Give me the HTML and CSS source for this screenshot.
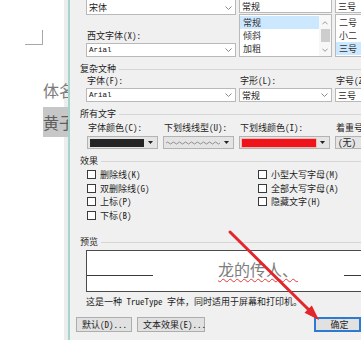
FILE: index.html
```html
<!DOCTYPE html>
<html lang="zh">
<head>
<meta charset="utf-8">
<title>字体</title>
<link rel="stylesheet" href="styles.css">
</head>
<body>
<div class="screen">
  <div class="doc">
    <div class="corner"></div>
    <div class="doc-line name">体名</div>
    <div class="doc-line hl">黄子</div>
  </div>
  <div class="dialog">
    <div class="fonts-top">
      <div class="col">
        <div class="combo c-first"><span>宋体</span><svg class="chev" viewBox="0 0 7 4"><polyline points="0.5,0.5 3.5,3.5 6.5,0.5"/></svg></div>
        <div class="label l-west">西文字体(X):</div>
        <div class="combo c-second"><span class="latin">Arial</span><svg class="chev" viewBox="0 0 7 4"><polyline points="0.5,0.5 3.5,3.5 6.5,0.5"/></svg></div>
      </div>
      <div class="col">
        <div class="field">常规</div>
        <div class="listbox">
          <div class="items">
            <div class="item sel">常规</div>
            <div class="item">倾斜</div>
            <div class="item">加粗</div>
          </div>
          <div class="scrollbar">
            <svg class="sb-arrow" viewBox="0 0 7 4"><polyline points="0.5,3.5 3.5,0.5 6.5,3.5"/></svg>
            <div class="thumb"></div>
            <svg class="sb-arrow" viewBox="0 0 7 4"><polyline points="0.5,0.5 3.5,3.5 6.5,0.5"/></svg>
          </div>
        </div>
      </div>
      <div class="col">
        <div class="field">三号</div>
        <div class="listbox">
          <div class="items">
            <div class="item">二号</div>
            <div class="item">小二</div>
            <div class="item sel">三号</div>
          </div>
        </div>
      </div>
    </div>

    <div class="group">复杂文种</div>
    <div class="grid3 labels">
      <div class="label">字体(F):</div>
      <div class="label">字形(L):</div>
      <div class="label">字号(Z):</div>
    </div>
    <div class="grid3 row-combos">
      <div class="combo"><span class="latin">Arial</span><svg class="chev" viewBox="0 0 7 4"><polyline points="0.5,0.5 3.5,3.5 6.5,0.5"/></svg></div>
      <div class="combo"><span>常规</span><svg class="chev" viewBox="0 0 7 4"><polyline points="0.5,0.5 3.5,3.5 6.5,0.5"/></svg></div>
      <div class="combo"><span>三号</span></div>
    </div>

    <div class="group">所有文字</div>
    <div class="grid4 labels">
      <div class="label">字体颜色(C):</div>
      <div class="label">下划线线型(U):</div>
      <div class="label">下划线颜色(I):</div>
      <div class="label">着重号(·)</div>
    </div>
    <div class="grid4 row-colors">
      <div class="dd"><span class="swatch black"></span><svg class="tri" viewBox="0 0 5 3"><polygon points="0,0 5,0 2.5,3"/></svg></div>
      <div class="dd"><svg class="wave" viewBox="0 0 54 4" preserveAspectRatio="none"><path d="M0 2 q1.5 -2 3 0 t3 0 t3 0 t3 0 t3 0 t3 0 t3 0 t3 0 t3 0 t3 0 t3 0 t3 0 t3 0 t3 0 t3 0 t3 0 t3 0 t3 0"/></svg><svg class="tri" viewBox="0 0 5 3"><polygon points="0,0 5,0 2.5,3"/></svg></div>
      <div class="dd"><span class="swatch red"></span><svg class="tri" viewBox="0 0 5 3"><polygon points="0,0 5,0 2.5,3"/></svg></div>
      <div class="dd"><span>(无)</span></div>
    </div>

    <div class="group">效果</div>
    <div class="checks">
      <div class="check"><span class="box"></span>删除线(K)</div>
      <div class="check"><span class="box"></span>双删除线(G)</div>
      <div class="check"><span class="box"></span>上标(P)</div>
      <div class="check"><span class="box"></span>下标(B)</div>
      <div class="check"><span class="box"></span>小型大写字母(M)</div>
      <div class="check"><span class="box"></span>全部大写字母(A)</div>
      <div class="check"><span class="box"></span>隐藏文字(H)</div>
    </div>

    <div class="group g-preview">预览</div>
    <div class="preview">
      <div class="base-line"></div>
      <div class="sample">龙的传人、</div>
      <div class="base-line right"></div>
    </div>
    <div class="desc">这是一种 TrueType 字体，同时适用于屏幕和打印机。</div>

    <div class="buttons">
      <div class="btn b-default">默认(D)...</div>
      <div class="btn b-effects">文本效果(E)...</div>
      <div class="btn b-ok">确定</div>
    </div>
  </div>

  <svg class="arrow" viewBox="0 0 361 340" width="361" height="340">
    <line x1="230" y1="232" x2="309" y2="310"/>
    <polygon points="319,320 304.5,312.7 311.8,305.4"/>
  </svg>
</div>
</body>
</html>
```

FILE: styles.css
```css
* { box-sizing: border-box; }
html, body { margin: 0; padding: 0; background: #fff; }

.screen {
  position: relative;
  width: 361px;
  height: 340px;
  overflow: hidden;
  display: flex;
  font-family: "Noto Sans Mono CJK SC", "Noto Sans CJK SC", sans-serif;
  font-size: 9px;
  color: #1e1e1e;
}

/* document behind the dialog */
.doc {
  width: 68px;
  flex: none;
  overflow: hidden;
  background: linear-gradient(to right, #fff 0, #fff 64px, #ededed 64px, #ededed 68px);
}
.corner {
  margin-top: 30px;
  margin-left: 25px;
  width: 18px;
  height: 15px;
  border-right: 1px solid #a8a8a8;
  border-bottom: 1px solid #a8a8a8;
}
.doc-line {
  font-family: "Noto Sans CJK SC", sans-serif;
  font-size: 16px;
  white-space: nowrap;
  margin-left: 43px;
  color: #7c7c7c;
}
.name { margin-top: 36px; line-height: 18px; }
.hl {
  margin-top: 8px;
  line-height: 30px;
  height: 30px;
  background: #c7c7c7;
  color: #5e5e5e;
}

/* dialog */
.dialog {
  flex: none;
  width: 293px;
  height: 340px;
  background: #f0f0f0;
  border-left: 2px solid #a3d6cd;
  overflow: hidden;
  padding-left: 10px;
}

.fonts-top {
  display: grid;
  grid-template-columns: 150px 93px 60px;
  column-gap: 3px;
  margin-left: 6px;
  margin-top: -2px;
  width: 320px;
}
.col { display: flex; flex-direction: column; }

.combo, .field {
  background: #fff;
  border: 1px solid #b9b9b9;
  display: flex;
  align-items: center;
  justify-content: space-between;
  padding: 0 3px 0 2px;
  height: 14px;
  white-space: nowrap;
}
.c-first { height: 17px; padding-top: 2px; }
.field { height: 15px; padding-top: 1px; }
.l-west { margin-top: 15px; }
.c-second { margin-top: 1px; }

.label { line-height: 12px; height: 12px; white-space: nowrap; padding-left: 1px; }
.latin { font-family: "Liberation Mono", monospace; font-size: 7.5px; color: #111; }

.chev { width: 7px; height: 4px; }
.chev polyline, .sb-arrow polyline { fill: none; stroke: #8a8a8a; stroke-width: 1; }

.listbox {
  margin-top: 1px;
  height: 43px;
  background: #fff;
  border: 1px solid #b9b9b9;
  display: flex;
}
.items { flex: 1; padding-top: 1px; }
.item { height: 13px; line-height: 13px; padding-left: 3px; white-space: nowrap; color: #333; }
.item.sel { background: #cce8ff; }
.scrollbar {
  width: 12px;
  display: flex;
  flex-direction: column;
  align-items: center;
  padding-top: 6px;
  background: #f7f7f7;
}
.sb-arrow { width: 6px; height: 4px; }
.thumb { width: 9px; height: 13px; background: #cdcdcd; margin: 4px 0 6px; }

.group {
  display: flex;
  align-items: center;
  gap: 3px;
  line-height: 12px;
  height: 12px;
  margin-top: 6px;
  white-space: nowrap;
}
.group::after {
  content: "";
  flex: 1;
  border-top: 1px solid #d6d6d6;
}

.grid3 {
  display: grid;
  grid-template-columns: 150px 93px 60px;
  column-gap: 3px;
  margin-left: 6px;
  width: 320px;
}
.row-combos { margin-top: 1px; }
.grid4 {
  display: grid;
  grid-template-columns: 71px 71px 91px 60px;
  column-gap: 5px;
  margin-left: 7px;
  width: 320px;
}
.grid4.labels { margin-top: 2px; }
.row-colors { margin-top: 2px; }

.dd {
  height: 13px;
  background: #e4e4e4;
  border: 1px solid #b3b3b3;
  display: flex;
  align-items: center;
  justify-content: space-between;
  padding: 0 4px 0 2px;
  white-space: nowrap;
}
.swatch { display: block; height: 8px; }
.swatch.black { width: 54px; background: #242424; }
.swatch.red { width: 74px; background: #ee141c; box-shadow: 0 0 0 1px #f7b9b4; }
.wave { width: 54px; height: 4px; }
.wave path { fill: none; stroke: #7a7a7a; stroke-width: 0.8; }
.tri { width: 5px; height: 3px; }
.tri polygon { fill: #222; }

.checks {
  margin-top: 1px;
  margin-left: 7px;
  display: grid;
  grid-template-columns: 171px 1fr;
  grid-template-rows: repeat(4, 13.5px);
  grid-auto-flow: column;
}
.check { display: flex; align-items: center; gap: 4px; white-space: nowrap; }
.box { width: 9px; height: 9px; border: 1px solid #3a3a3a; background: #fff; flex: none; }

.g-preview { margin-top: 14px; }
.preview {
  margin-top: 2px;
  margin-left: 6px;
  width: 320px;
  height: 42px;
  background: #fff;
  border: 1px solid #4a4a4a;
  display: flex;
  align-items: flex-start;
}
.base-line {
  width: 66px;
  height: 25px;
  border-bottom: 1px solid #3a3a3a;
  flex: none;
}
.base-line.right { margin-left: 46px; width: 40px; }
.sample {
  margin-left: 65px;
  margin-top: 8px;
  font-family: "Noto Sans CJK SC", sans-serif;
  font-size: 16px;
  line-height: 20px;
  color: #7e7e7e;
  white-space: nowrap;
  text-decoration: underline wavy #e53a3a;
  text-decoration-thickness: 1px;
  text-underline-offset: 2px;
}
.desc {
  margin-top: 4px;
  margin-left: 6px;
  line-height: 12px;
  white-space: nowrap;
}

.buttons {
  margin-top: 9px;
  margin-left: -4px;
  display: flex;
  gap: 5px;
  height: 15px;
}
.btn {
  height: 15px;
  background: #e1e1e1;
  border: 1px solid #adadad;
  display: flex;
  align-items: center;
  padding-left: 5px;
  white-space: nowrap;
}
.b-default { width: 56px; }
.b-effects { width: 68px; }
.b-ok {
  margin-left: auto;
  width: 47px;
  justify-content: center;
  padding-left: 4px;
  border: 2px solid #2c7bd0;
}

.arrow { position: absolute; left: 0; top: 0; pointer-events: none; }
.arrow line { stroke: #e2262b; stroke-width: 3; stroke-linecap: round; }
.arrow polygon { fill: #e2262b; }
```
